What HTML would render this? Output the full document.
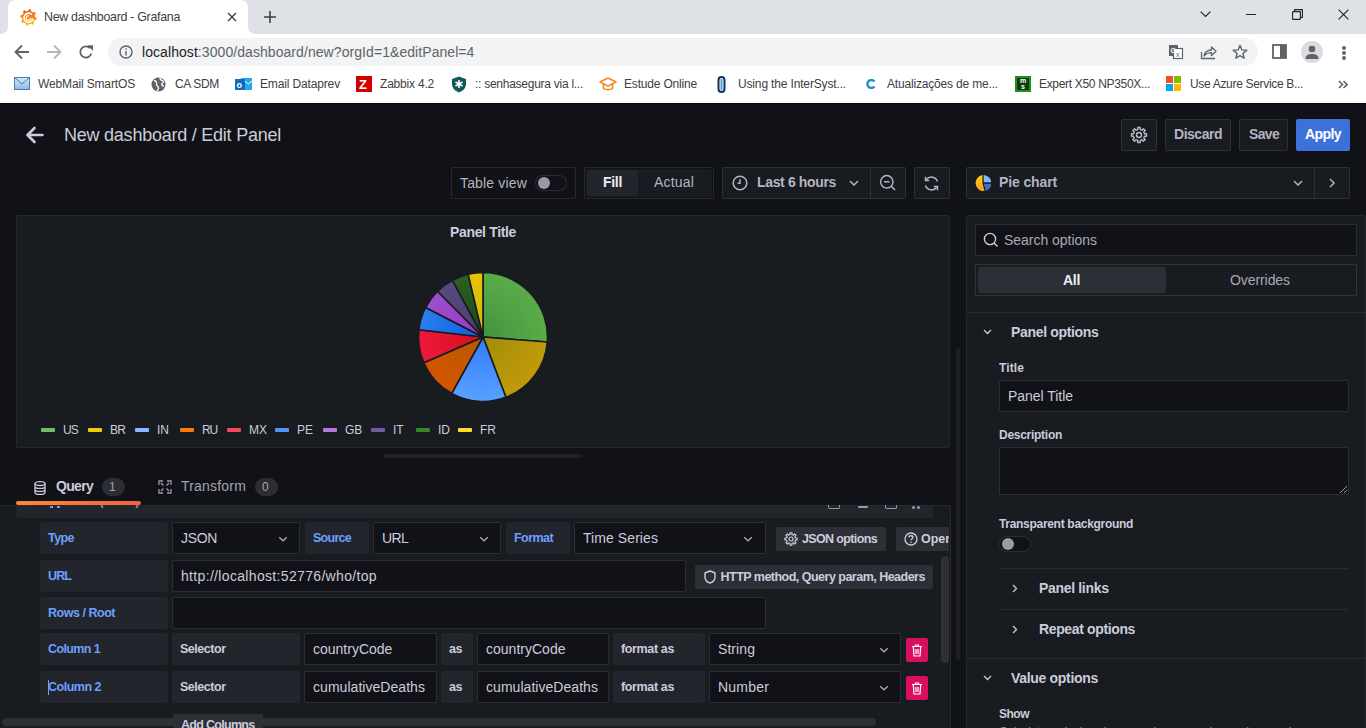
<!DOCTYPE html>
<html><head><meta charset="utf-8">
<style>
*{box-sizing:border-box;margin:0;padding:0}
html,body{width:1366px;height:728px;overflow:hidden;background:#111217;font-family:"Liberation Sans",sans-serif}
.a{position:absolute}
.t{position:absolute;white-space:nowrap;line-height:1}
/* chrome */
#tabstrip{left:0;top:0;width:1366px;height:34px;background:#dee1e6}
#tab{left:8px;top:0;width:240px;height:34px;background:#fff;border-radius:8px 8px 0 0}
#toolbar{left:0;top:34px;width:1366px;height:69px;background:#fff}
#omni{left:108px;top:38px;width:1150px;height:28px;background:#f1f3f4;border-radius:14px}
.ct{font-size:12px;color:#3c4043}
/* grafana */
#g{left:0;top:103px;width:1366px;height:625px;background:#111217;border-top:1px solid #050609}
.btn{position:absolute;border:1px solid rgba(204,204,220,0.12);background:#181b1f;border-radius:2px}
.gt{color:#ccccdc}
</style></head><body>
<!-- Browser chrome -->
<div id="tabstrip" class="a"></div>
<div id="toolbar" class="a"></div>
<div id="omni" class="a"></div>
<!-- tab -->
<svg class="a" style="left:0;top:0" width="1366" height="34">
  <path d="M0 34 Q8 34 8 26 L8 8 Q8 0 16 0 L240 0 Q248 0 248 8 L248 26 Q248 34 256 34 Z" fill="#fff"></path>
</svg>
<svg class="a" style="left:20px;top:9px" width="17" height="17" viewBox="0 0 16 16"><defs><linearGradient id="gf" x1="0" y1="1" x2="0" y2="0"><stop offset="0" stop-color="#fcc80a"/><stop offset="1" stop-color="#f2502a"/></linearGradient></defs><path d="M7.67 1.71 L8.55 0.12 L10.18 0.41 L10.46 2.20 L12.22 3.32 L13.96 2.82 L14.91 4.17 L13.84 5.64 L14.29 7.67 L15.88 8.55 L15.59 10.18 L13.80 10.46 L12.68 12.22 L13.18 13.96 L11.83 14.91 L10.36 13.84 L8.33 14.29 L7.45 15.88 L5.82 15.59 L5.54 13.80 L3.78 12.68 L2.04 13.18 L1.09 11.83 L2.16 10.36 L1.71 8.33 L0.12 7.45 L0.41 5.82 L2.20 5.54 L3.32 3.78 L2.82 2.04 L4.17 1.09 L5.64 2.16Z" fill="url(#gf)"/><path d="M11.2 5.2A4.3 4.3 0 1 0 12.3 9.2" fill="none" stroke="#fff" stroke-width="1.5"/><path d="M10.3 8.5A2.2 2.2 0 1 1 8.3 6.3" fill="none" stroke="#fff" stroke-width="1.1"/></svg>
<div class="t ct" style="left: 44px; top: 11px; font-size: 12.4px; color: rgb(60, 64, 67); letter-spacing: -0.286px;">New dashboard - Grafana</div>
<svg class="a" style="left:227px;top:12px" width="10" height="10"><path d="M1 1L9 9M9 1L1 9" stroke="#3c4043" stroke-width="1.4"></path></svg>
<svg class="a" style="left:263px;top:10px" width="14" height="14"><path d="M7 1V13M1 7H13" stroke="#3c4043" stroke-width="1.6"></path></svg>
<!-- window controls -->
<svg class="a" style="left:1199.5px;top:10.5px" width="11" height="7"><path d="M0.6 0.6L5.5 5.5L10.4 0.6" fill="none" stroke="#202124" stroke-width="1.1"/></svg>
<div class="a" style="left:1246px;top:14px;width:10px;height:1px;background:#202124"></div>
<svg class="a" style="left:1291.5px;top:8.5px" width="11" height="11"><rect x="0.6" y="2.6" width="7.8" height="7.8" rx="0.5" fill="none" stroke="#202124" stroke-width="1.1"/><path d="M2.6 2.6V0.6H10.4V8.4H8.4" fill="none" stroke="#202124" stroke-width="1.1"/></svg>
<svg class="a" style="left:1337.5px;top:8.5px" width="11" height="11"><path d="M0.6 0.6L10.4 10.4M10.4 0.6L0.6 10.4" stroke="#202124" stroke-width="1.1"/></svg>
<!-- toolbar -->
<svg class="a" style="left:14px;top:44px" width="16" height="16"><path d="M15 8H2M8 1.5L1.5 8L8 14.5" fill="none" stroke="#5f6368" stroke-width="1.8"></path></svg>
<svg class="a" style="left:46px;top:44px" width="16" height="16"><path d="M1 8H14M8 1.5L14.5 8L8 14.5" fill="none" stroke="#b4b6b9" stroke-width="1.8"></path></svg>
<svg class="a" style="left:78px;top:44px" width="16" height="16"><path d="M13.3 9.5A5.6 5.6 0 1 1 12 4.2" fill="none" stroke="#5f6368" stroke-width="1.8"></path><path d="M9.3 1.3L15 1.3L15 7Z" fill="#5f6368"></path></svg>
<svg class="a" style="left:119px;top:45px" width="14" height="14"><circle cx="7" cy="7" r="6" fill="none" stroke="#5f6368" stroke-width="1.4"></circle><rect x="6.3" y="6" width="1.4" height="4.5" fill="#5f6368"></rect><rect x="6.3" y="3.3" width="1.4" height="1.5" fill="#5f6368"></rect></svg>
<div class="t" style="left: 142px; top: 45px; font-size: 14px; color: rgb(95, 99, 104); letter-spacing: 0.067px;"><span style="color:#202124">localhost</span>:3000/dashboard/new?orgId=1&amp;editPanel=4</div>
<!-- right icons -->
<svg class="a" style="left:1168px;top:44px" width="16" height="16"><rect x="1" y="1" width="9" height="11" fill="#5f6368"></rect><rect x="5.5" y="4.5" width="9" height="10" fill="#fff" stroke="#5f6368" stroke-width="1.2"></rect><text x="2.5" y="9" font-size="7" fill="#fff" font-family="Liberation Sans" font-weight="bold">G</text><text x="8" y="12.5" font-size="7" fill="#5f6368" font-family="Liberation Sans">x</text></svg>
<svg class="a" style="left:1200px;top:44px" width="17" height="16"><path d="M1.5 8V14.5H15" fill="none" stroke="#5f6368" stroke-width="1.3"></path><path d="M4 12C5 7 8.5 6 11.5 6V3L16 7.3L11.5 11.5V8.6C8.5 8.6 6 9.5 4 12Z" fill="none" stroke="#5f6368" stroke-width="1.3" stroke-linejoin="round"></path></svg>
<svg class="a" style="left:1232px;top:44px" width="16" height="16"><path d="M8 1.3L9.9 5.9L14.8 6.2L11 9.4L12.2 14.2L8 11.6L3.8 14.2L5 9.4L1.2 6.2L6.1 5.9Z" fill="none" stroke="#5f6368" stroke-width="1.4" stroke-linejoin="round"></path></svg>
<svg class="a" style="left:1272px;top:44px" width="16" height="15"><rect x="1" y="1" width="13" height="13" fill="none" stroke="#5f6368" stroke-width="1.8"></rect><rect x="8" y="1" width="6" height="13" fill="#5f6368"></rect></svg>
<div class="a" style="left:1301px;top:41px;width:22px;height:22px;border-radius:11px;background:#dadce0"></div>
<svg class="a" style="left:1304px;top:45px" width="16" height="15"><circle cx="8" cy="4" r="3.3" fill="#5f6368"></circle><path d="M1.5 14C1.5 10 4.5 9 8 9C11.5 9 14.5 10 14.5 14Z" fill="#5f6368"></path></svg>
<div class="a" style="left:1342px;top:46px;width:4px;height:4px;border-radius:2px;background:#5f6368"></div>
<div class="a" style="left:1342px;top:51px;width:4px;height:4px;border-radius:2px;background:#5f6368"></div>
<div class="a" style="left:1342px;top:56px;width:4px;height:4px;border-radius:2px;background:#5f6368"></div>
<!-- bookmarks -->
<svg class="a" style="left:14px;top:77px" width="16" height="14"><defs><linearGradient id="ml" x1="0" y1="0" x2="0" y2="1"><stop offset="0" stop-color="#d6e8f7"/><stop offset="1" stop-color="#8db9e0"/></linearGradient></defs><rect x="0.5" y="0.5" width="15" height="12" fill="url(#ml)" stroke="#3f7fc0"/><path d="M0.5 0.5L8 7L15.5 0.5" fill="none" stroke="#3f7fc0"/></svg>
<div class="t ct" style="left: 38px; top: 78px; letter-spacing: -0.143px;">WebMail SmartOS</div>
<svg class="a" style="left:151px;top:77px" width="15" height="15"><circle cx="7.5" cy="7.5" r="7" fill="#5f6368"></circle><path d="M3 3.5C5 4 6 5 5.5 7C5 8.5 7 9 7.5 10.5C8 12 6.5 13 6 14M9 1C9 3 10.5 3.5 12 4C13 4.5 12 6 11 6.5C10 7 10.5 9 13 9" fill="none" stroke="#fff" stroke-width="1.3"></path></svg>
<div class="t ct" style="left: 175px; top: 78px; letter-spacing: -0.336px;">CA SDM</div>
<svg class="a" style="left:235px;top:76px" width="17" height="16"><rect x="6" y="2" width="11" height="12" fill="#28a8ea"></rect><rect x="0" y="3" width="10" height="11" fill="#0f6cbd"></rect><text x="1.5" y="12" font-size="9" font-weight="bold" fill="#fff" font-family="Liberation Sans">o</text><path d="M10 5L13.5 8L17 5" fill="none" stroke="#fff" stroke-width="1"></path></svg>
<div class="t ct" style="left: 260px; top: 78px; letter-spacing: -0.145px;">Email Dataprev</div>
<div class="a" style="left:356px;top:76px;width:16px;height:16px;background:#d40000"></div>
<div class="t" style="left: 359px; top: 78px; font-size: 13px; font-weight: bold; color: rgb(255, 255, 255);">Z</div>
<div class="t ct" style="left: 380px; top: 78px; letter-spacing: -0.205px;">Zabbix 4.2</div>
<svg class="a" style="left:451px;top:76px" width="16" height="17"><path d="M8 0.5L15 3V8C15 12 12 15 8 16.5C4 15 1 12 1 8V3Z" fill="#0e5c55"></path><path d="M8 4V12M4.5 6L11.5 10M11.5 6L4.5 10" stroke="#fff" stroke-width="1.6"></path></svg>
<div class="t ct" style="left: 475px; top: 78px; letter-spacing: -0.264px;">:: senhasegura via l...</div>
<svg class="a" style="left:599px;top:77px" width="18" height="15"><path d="M1 5L9 1L17 5L9 9Z" fill="none" stroke="#f08a24" stroke-width="1.6" stroke-linejoin="round"></path><path d="M4.5 7V11.5C6 13 12 13 13.5 11.5V7" fill="none" stroke="#f08a24" stroke-width="1.6"></path></svg>
<div class="t ct" style="left: 624px; top: 78px; letter-spacing: -0.184px;">Estude Online</div>
<svg class="a" style="left:717px;top:76px" width="10" height="17"><rect x="1.5" y="1" width="6" height="15" rx="3" fill="none" stroke="#1a2d5a" stroke-width="2"></rect><rect x="3.5" y="3" width="2" height="11" fill="#3fa7e0"></rect></svg>
<div class="t ct" style="left: 738px; top: 78px; letter-spacing: -0.154px;">Using the InterSyst...</div>
<svg class="a" style="left:865px;top:79px" width="11" height="10"><path d="M9.5 2.5A4 4 0 1 0 9.5 7.5" fill="none" stroke="#1d8fd1" stroke-width="2.4"></path></svg>
<div class="t ct" style="left: 887px; top: 78px; letter-spacing: -0.178px;">Atualizações de me...</div>
<div class="a" style="left:1015px;top:76px;width:16px;height:16px;background:#1f8f1f"></div>
<div class="a" style="left:1017px;top:78px;width:12px;height:12px;background:#0b3d0b"></div>
<div class="t" style="left: 1017px; top: 78px; font-size: 7px; font-weight: bold; color: rgb(255, 255, 255); line-height: 6px; width: 12px; text-align: center;">m<br>s</div>
<div class="t ct" style="left: 1039px; top: 78px; letter-spacing: -0.32px;">Expert X50 NP350X...</div>
<div class="a" style="left:1166px;top:76px;width:7px;height:7px;background:#f25022"></div>
<div class="a" style="left:1174px;top:76px;width:7px;height:7px;background:#7fba00"></div>
<div class="a" style="left:1166px;top:84px;width:7px;height:7px;background:#00a4ef"></div>
<div class="a" style="left:1174px;top:84px;width:7px;height:7px;background:#ffb900"></div>
<div class="t ct" style="left: 1190px; top: 78px; letter-spacing: -0.32px;">Use Azure Service B...</div>
<svg class="a" style="left:1338px;top:80px" width="10" height="9"><path d="M1 1L4.5 4.5L1 8M5.5 1L9 4.5L5.5 8" fill="none" stroke="#5f6368" stroke-width="1.6"></path></svg>


<!-- Grafana -->
<div id="g" class="a"></div>
<!-- page toolbar -->
<svg class="a" style="left:25px;top:126px" width="19" height="18" viewBox="0 0 19 18"><path d="M17.5 9H3M9.5 2L2.5 9L9.5 16" fill="none" stroke="#ccccdc" stroke-width="2.6" stroke-linecap="round" stroke-linejoin="round"></path></svg>
<div class="t gt" style="left: 64px; top: 126px; font-size: 18px; letter-spacing: -0.236px;">New dashboard / Edit Panel</div>
<div class="btn" style="left:1121px;top:119px;width:36px;height:32px"></div>
<svg class="a" style="left:1130px;top:126px" width="18" height="18"><path d="M7.28 3.67 L7.75 3.54 L7.75 1.50 L10.25 1.50 L10.25 3.54 L11.55 4.01 L11.98 4.26 L13.42 2.82 L15.18 4.58 L13.74 6.02 L14.33 7.28 L14.46 7.75 L16.50 7.75 L16.50 10.25 L14.46 10.25 L13.99 11.55 L13.74 11.98 L15.18 13.42 L13.42 15.18 L11.98 13.74 L10.72 14.33 L10.25 14.46 L10.25 16.50 L7.75 16.50 L7.75 14.46 L6.45 13.99 L6.02 13.74 L4.58 15.18 L2.82 13.42 L4.26 11.98 L3.67 10.72 L3.54 10.25 L1.50 10.25 L1.50 7.75 L3.54 7.75 L4.01 6.45 L4.26 6.02 L2.82 4.58 L4.58 2.82 L6.02 4.26Z" fill="none" stroke="#b9b9c6" stroke-width="1.4" stroke-linejoin="round"/><circle cx="9" cy="9" r="2.5" fill="none" stroke="#b9b9c6" stroke-width="1.4"/></svg>
<div class="btn" style="left:1165px;top:119px;width:66px;height:32px"></div>
<div class="t" style="left: 1174px; top: 127px; font-size: 14px; font-weight: bold; color: rgb(180, 180, 194); letter-spacing: -0.48px;">Discard</div>
<div class="btn" style="left:1239px;top:119px;width:49px;height:32px"></div>
<div class="t" style="left: 1249px; top: 127px; font-size: 14px; font-weight: bold; color: rgb(180, 180, 194); letter-spacing: -0.676px;">Save</div>
<div class="a" style="left:1296px;top:119px;width:54px;height:32px;background:#3d71d9;border-radius:2px"></div>
<div class="t" style="left: 1305px; top: 127px; font-size: 14px; font-weight: bold; color: rgb(255, 255, 255); letter-spacing: -0.578px;">Apply</div>

<!-- second row -->
<div class="btn" style="left:451px;top:167px;width:125px;height:32px;background:#111217"></div>
<div class="t" style="left: 460px; top: 176px; font-size: 14px; color: rgb(180, 180, 194); letter-spacing: 0.163px;">Table view</div>
<div class="a" style="left:535px;top:175px;width:32px;height:16px;border-radius:8px;border:1px solid rgba(204,204,220,0.15);background:#111217"></div>
<div class="a" style="left:538px;top:177px;width:12px;height:12px;border-radius:6px;background:#9a99a6"></div>
<div class="btn" style="left:584px;top:167px;width:130px;height:32px;background:#111217"></div>
<div class="a" style="left:586px;top:169px;width:126px;height:28px;background:#181b1f;border-radius:2px"></div>
<div class="a" style="left:587px;top:170px;width:51px;height:26px;background:#22252b;border-radius:2px"></div>
<div class="t" style="left: 603px; top: 175px; font-size: 14px; font-weight: bold; color: rgb(236, 236, 243); letter-spacing: -0.309px;">Fill</div>
<div class="t" style="left: 654px; top: 175px; font-size: 14px; color: rgb(180, 180, 194); letter-spacing: 0.18px;">Actual</div>
<div class="btn" style="left:722px;top:167px;width:184px;height:32px"></div>
<div class="a" style="left:870px;top:168px;width:1px;height:30px;background:rgba(204,204,220,0.12)"></div>
<svg class="a" style="left:732px;top:175px" width="16" height="16"><circle cx="8" cy="8" r="6.8" fill="none" stroke="#b4b4c2" stroke-width="1.5"></circle><path d="M8 4.2V8.3H5.5" fill="none" stroke="#b4b4c2" stroke-width="1.5"></path></svg>
<div class="t" style="left: 757px; top: 175px; font-size: 14px; font-weight: bold; color: rgb(180, 180, 194); letter-spacing: -0.354px;">Last 6 hours</div>
<svg class="a" style="left:849px;top:180px" width="10" height="6"><path d="M1 1L5 5L9 1" fill="none" stroke="#b4b4c2" stroke-width="1.5"></path></svg>
<svg class="a" style="left:879px;top:174px" width="18" height="18"><circle cx="7.8" cy="7.8" r="6.2" fill="none" stroke="#b4b4c2" stroke-width="1.5"></circle><path d="M5 7.8H10.6M12.3 12.3L16 16" fill="none" stroke="#b4b4c2" stroke-width="1.5"></path></svg>
<div class="btn" style="left:914px;top:167px;width:36px;height:32px"></div>
<svg class="a" style="left:923px;top:175px" width="17" height="17" viewBox="0 0 17 17"><path d="M14.5 6.5A6.3 6.3 0 0 0 3.3 4.8M2.5 10.5A6.3 6.3 0 0 0 13.7 12.2" fill="none" stroke="#b4b4c2" stroke-width="1.5"></path><path d="M2.5 1.8V5.5H6.2M14.5 15.2V11.5H10.8" fill="none" stroke="#b4b4c2" stroke-width="1.5"></path></svg>
<div class="btn" style="left:966px;top:167px;width:384px;height:32px"></div>
<div class="a" style="left:1314px;top:168px;width:1px;height:30px;background:rgba(204,204,220,0.12)"></div>
<svg class="a" style="left:975px;top:174.8px" width="16.4" height="16.4" viewBox="0 0 16 16"><defs><linearGradient id="pyg" x1="0" y1="0" x2="0" y2="1"><stop offset="0" stop-color="#ffd30a"/><stop offset="1" stop-color="#ff9a22"/></linearGradient></defs><path d="M7.3 0.05A8 8 0 0 0 9.4 15.9L7.3 8Z" fill="url(#pyg)"/><path d="M8.5 0.05A8 8 0 0 1 15.98 7.1L8.5 7.1Z" fill="#84b5ff"/><path d="M15.98 8.5A8 8 0 0 1 10.6 15.5L8.5 8.5Z" fill="#3e6fc4"/></svg>
<div class="t" style="left: 999px; top: 175px; font-size: 14px; font-weight: bold; color: rgb(180, 180, 194); letter-spacing: -0.127px;">Pie chart</div>
<svg class="a" style="left:1293px;top:180px" width="10" height="6"><path d="M1 1L5 5L9 1" fill="none" stroke="#b4b4c2" stroke-width="1.5"></path></svg>
<svg class="a" style="left:1329px;top:178px" width="6" height="10"><path d="M1 1L5 5L1 9" fill="none" stroke="#b4b4c2" stroke-width="1.5"></path></svg>

<!-- panel -->
<div class="a" style="left:16px;top:215px;width:934px;height:233px;background:#181b1f;border:1px solid rgba(204,204,220,0.07);border-radius:2px"></div>
<div class="t" style="left: 450px; top: 225px; font-size: 14px; font-weight: bold; color: rgb(204, 204, 220); letter-spacing: -0.344px;">Panel Title</div>
<div id="pie"></div><svg id="piesvg" class="a" style="left:408.3px;top:261.7px" width="150" height="150"><defs><radialGradient id="pg0" cx="75.0" cy="75.0" r="64.5" gradientUnits="userSpaceOnUse"><stop offset="0" stop-color="#44933f"></stop><stop offset="1" stop-color="#5aac49"></stop></radialGradient><radialGradient id="pg1" cx="75.0" cy="75.0" r="64.5" gradientUnits="userSpaceOnUse"><stop offset="0" stop-color="#9f8e08"></stop><stop offset="1" stop-color="#c19a0a"></stop></radialGradient><radialGradient id="pg2" cx="75.0" cy="75.0" r="64.5" gradientUnits="userSpaceOnUse"><stop offset="0" stop-color="#3379ff"></stop><stop offset="1" stop-color="#57a1ff"></stop></radialGradient><radialGradient id="pg3" cx="75.0" cy="75.0" r="64.5" gradientUnits="userSpaceOnUse"><stop offset="0" stop-color="#b25900"></stop><stop offset="1" stop-color="#d65500"></stop></radialGradient><radialGradient id="pg4" cx="75.0" cy="75.0" r="64.5" gradientUnits="userSpaceOnUse"><stop offset="0" stop-color="#d50f1c"></stop><stop offset="1" stop-color="#ef193c"></stop></radialGradient><radialGradient id="pg5" cx="75.0" cy="75.0" r="64.5" gradientUnits="userSpaceOnUse"><stop offset="0" stop-color="#1159e1"></stop><stop offset="1" stop-color="#2880ee"></stop></radialGradient><radialGradient id="pg6" cx="75.0" cy="75.0" r="64.5" gradientUnits="userSpaceOnUse"><stop offset="0" stop-color="#9b36c3"></stop><stop offset="1" stop-color="#9d4fce"></stop></radialGradient><radialGradient id="pg7" cx="75.0" cy="75.0" r="64.5" gradientUnits="userSpaceOnUse"><stop offset="0" stop-color="#4c3d69"></stop><stop offset="1" stop-color="#574a80"></stop></radialGradient><radialGradient id="pg8" cx="75.0" cy="75.0" r="64.5" gradientUnits="userSpaceOnUse"><stop offset="0" stop-color="#1a4617"></stop><stop offset="1" stop-color="#2b6120"></stop></radialGradient><radialGradient id="pg9" cx="75.0" cy="75.0" r="64.5" gradientUnits="userSpaceOnUse"><stop offset="0" stop-color="#c9b805"></stop><stop offset="1" stop-color="#ebc106"></stop></radialGradient></defs><path d="M75.00 75.00L75.00 10.50A64.5 64.5 0 0 1 139.30 80.06Z" fill="url(#pg0)" stroke="#181b1f" stroke-width="1.6" stroke-linejoin="round"></path><path d="M75.00 75.00L139.30 80.06A64.5 64.5 0 0 1 97.90 135.30Z" fill="url(#pg1)" stroke="#181b1f" stroke-width="1.6" stroke-linejoin="round"></path><path d="M75.00 75.00L97.90 135.30A64.5 64.5 0 0 1 43.73 131.41Z" fill="url(#pg2)" stroke="#181b1f" stroke-width="1.6" stroke-linejoin="round"></path><path d="M75.00 75.00L43.73 131.41A64.5 64.5 0 0 1 15.85 100.72Z" fill="url(#pg3)" stroke="#181b1f" stroke-width="1.6" stroke-linejoin="round"></path><path d="M75.00 75.00L15.85 100.72A64.5 64.5 0 0 1 10.91 67.70Z" fill="url(#pg4)" stroke="#181b1f" stroke-width="1.6" stroke-linejoin="round"></path><path d="M75.00 75.00L10.91 67.70A64.5 64.5 0 0 1 17.68 45.42Z" fill="url(#pg5)" stroke="#181b1f" stroke-width="1.6" stroke-linejoin="round"></path><path d="M75.00 75.00L17.68 45.42A64.5 64.5 0 0 1 29.55 29.23Z" fill="url(#pg6)" stroke="#181b1f" stroke-width="1.6" stroke-linejoin="round"></path><path d="M75.00 75.00L29.55 29.23A64.5 64.5 0 0 1 44.42 18.21Z" fill="url(#pg7)" stroke="#181b1f" stroke-width="1.6" stroke-linejoin="round"></path><path d="M75.00 75.00L44.42 18.21A64.5 64.5 0 0 1 60.16 12.23Z" fill="url(#pg8)" stroke="#181b1f" stroke-width="1.6" stroke-linejoin="round"></path><path d="M75.00 75.00L60.16 12.23A64.5 64.5 0 0 1 75.00 10.50Z" fill="url(#pg9)" stroke="#181b1f" stroke-width="1.6" stroke-linejoin="round"></path></svg>
<div id="legend"></div><div class="a" style="left:41px;top:428px;width:14px;height:4px;border-radius:1px;background:#73BF69"></div><div class="t" style="left: 63px; top: 424px; font-size: 12px; color: rgb(204, 204, 220); letter-spacing: -0.836px;">US</div><div class="a" style="left:88px;top:428px;width:14px;height:4px;border-radius:1px;background:#F2CC0C"></div><div class="t" style="left: 110px; top: 424px; font-size: 12px; color: rgb(204, 204, 220); letter-spacing: -0.836px;">BR</div><div class="a" style="left:135px;top:428px;width:14px;height:4px;border-radius:1px;background:#8AB8FF"></div><div class="t" style="left: 157px; top: 424px; font-size: 12px; color: rgb(204, 204, 220);">IN</div><div class="a" style="left:180px;top:428px;width:14px;height:4px;border-radius:1px;background:#FF780A"></div><div class="t" style="left: 202px; top: 424px; font-size: 12px; color: rgb(204, 204, 220); letter-spacing: -1.172px;">RU</div><div class="a" style="left:227px;top:428px;width:14px;height:4px;border-radius:1px;background:#F2495C"></div><div class="t" style="left: 249px; top: 424px; font-size: 12px; color: rgb(204, 204, 220); letter-spacing: 0px;">MX</div><div class="a" style="left:275px;top:428px;width:14px;height:4px;border-radius:1px;background:#5794F2"></div><div class="t" style="left: 297px; top: 424px; font-size: 12px; color: rgb(204, 204, 220);">PE</div><div class="a" style="left:323px;top:428px;width:14px;height:4px;border-radius:1px;background:#B877D9"></div><div class="t" style="left: 345px; top: 424px; font-size: 12px; color: rgb(204, 204, 220);">GB</div><div class="a" style="left:371px;top:428px;width:14px;height:4px;border-radius:1px;background:#705DA0"></div><div class="t" style="left: 393px; top: 424px; font-size: 12px; color: rgb(204, 204, 220);">IT</div><div class="a" style="left:416px;top:428px;width:14px;height:4px;border-radius:1px;background:#37872D"></div><div class="t" style="left: 438px; top: 424px; font-size: 12px; color: rgb(204, 204, 220);">ID</div><div class="a" style="left:458px;top:428px;width:14px;height:4px;border-radius:1px;background:#FADE2A"></div><div class="t" style="left: 480px; top: 424px; font-size: 12px; color: rgb(204, 204, 220);">FR</div>
<div class="a" style="left:383px;top:454px;width:200px;height:4px;border-radius:2px;background:#1f2025"></div>

<!-- splitter scrollbar -->
<div class="a" style="left:956px;top:348px;width:4px;height:312px;border-radius:2px;background:#1f2025"></div>

<!-- tabs -->
<div id="tabs"></div>
<svg class="a" style="left:34px;top:481px" width="12" height="14" viewBox="0 0 12 14"><ellipse cx="6" cy="2.6" rx="5" ry="1.9" fill="none" stroke="#ccccdc" stroke-width="1.3"></ellipse><path d="M1 2.6V11.4C1 12.5 3.2 13.3 6 13.3S11 12.5 11 11.4V2.6M1 5.5C1 6.6 3.2 7.4 6 7.4S11 6.6 11 5.5M1 8.5C1 9.6 3.2 10.4 6 10.4S11 9.6 11 8.5" fill="none" stroke="#ccccdc" stroke-width="1.3"></path></svg>
<div class="t" style="left: 56px; top: 479px; font-size: 14px; font-weight: bold; color: rgb(204, 204, 220); letter-spacing: -0.694px;">Query</div>
<div class="a" style="left:102px;top:478px;width:23px;height:18px;border-radius:9px;background:#2c2e33"></div>
<div class="t" style="left: 109px; top: 481px; font-size: 12px; color: rgb(163, 163, 176);">1</div>
<svg class="a" style="left:158px;top:480px" width="14" height="14" viewBox="0 0 14 14"><path d="M1 5V1H5M9 1H13V5M13 9V13H9M5 13H1V9" fill="none" stroke="#9a9aa8" stroke-width="1.3"></path><path d="M3 3L5.5 5.5M11 3L8.5 5.5M11 11L8.5 8.5M3 11L5.5 8.5" fill="none" stroke="#9a9aa8" stroke-width="1.3"></path></svg>
<div class="t" style="left: 181px; top: 479px; font-size: 14px; color: rgb(163, 163, 176); letter-spacing: 0.191px;">Transform</div>
<div class="a" style="left:255px;top:478px;width:23px;height:18px;border-radius:9px;background:#2c2e33"></div>
<div class="t" style="left: 262px; top: 481px; font-size: 12px; color: rgb(163, 163, 176);">0</div>
<div class="a" style="left:16px;top:501px;width:125px;height:4px;border-radius:2px;background:linear-gradient(90deg,#ff8833,#f55f3e)"></div>

<!-- query -->
<div id="query"></div>
<div class="a" style="left:-4px;top:505px;width:955px;height:240px;background:#181b1f;border:1px solid rgba(204,204,220,0.09);border-radius:3px"></div>
<div class="a" style="left:16px;top:506px;width:917px;height:12px;background:#22252b;border-radius:0 0 3px 3px"></div>
<div class="a" style="left:828px;top:505px;width:12px;height:4px;border:1.3px solid #9a9aa8;border-top:none;border-radius:0 0 2px 2px"></div><div class="a" style="left:858px;top:506px;width:10px;height:2px;border-radius:1px;background:#9a9aa8"></div><div class="a" style="left:885px;top:505px;width:12px;height:4px;border:1.3px solid #9a9aa8;border-top:none;border-radius:0 0 2px 2px"></div><div class="a" style="left:912px;top:506px;width:3px;height:3px;border-radius:2px;background:#9a9aa8"></div><div class="a" style="left:917px;top:506px;width:3px;height:3px;border-radius:2px;background:#9a9aa8"></div><div class="a" style="left:50px;top:506px;width:3px;height:2px;background:#6e9fff"></div><div class="a" style="left:57px;top:506px;width:3px;height:2px;background:#6e9fff"></div><div class="a" style="left:101px;top:505px;width:2px;height:3px;background:#8a8a96;transform:skewX(20deg)"></div><div class="a" style="left:136px;top:505px;width:2px;height:3px;background:#8a8a96;transform:skewX(-20deg)"></div><div class="a" style="left:40px;top:522px;width:128px;height:32px;background:#22252b;border-radius:2px"></div><div class="t" style="left: 48px; top: 531.8px; font-size: 12.5px; font-weight: bold; color: rgb(110, 159, 255); letter-spacing: -0.562px;">Type</div><div class="a" style="left:172px;top:522px;width:128px;height:32px;background:#111217;border:1px solid rgba(204,204,220,0.15);border-radius:2px"></div><div class="t" style="left: 181px; top: 531px; font-size: 14px; color: rgb(204, 204, 220); letter-spacing: -0.336px;">JSON</div><svg class="a" style="left:278px;top:536px" width="10" height="6"><path d="M1.2 1.2L5 4.8L8.8 1.2" fill="none" stroke="#a9a9b6" stroke-width="1.3"></path></svg><div class="a" style="left:305px;top:522px;width:64px;height:32px;background:#22252b;border-radius:2px"></div><div class="t" style="left: 313px; top: 531.8px; font-size: 12.5px; font-weight: bold; color: rgb(110, 159, 255); letter-spacing: -0.732px;">Source</div><div class="a" style="left:373px;top:522px;width:128px;height:32px;background:#111217;border:1px solid rgba(204,204,220,0.15);border-radius:2px"></div><div class="t" style="left: 382px; top: 531px; font-size: 14px; color: rgb(204, 204, 220); letter-spacing: -0.6px;">URL</div><svg class="a" style="left:479px;top:536px" width="10" height="6"><path d="M1.2 1.2L5 4.8L8.8 1.2" fill="none" stroke="#a9a9b6" stroke-width="1.3"></path></svg><div class="a" style="left:506px;top:522px;width:64px;height:32px;background:#22252b;border-radius:2px"></div><div class="t" style="left: 514px; top: 531.8px; font-size: 12.5px; font-weight: bold; color: rgb(110, 159, 255); letter-spacing: -0.562px;">Format</div><div class="a" style="left:574px;top:522px;width:192px;height:32px;background:#111217;border:1px solid rgba(204,204,220,0.15);border-radius:2px"></div><div class="t" style="left: 583px; top: 531px; font-size: 14px; color: rgb(204, 204, 220); letter-spacing: 0.075px;">Time Series</div><svg class="a" style="left:743px;top:536px" width="10" height="6"><path d="M1.2 1.2L5 4.8L8.8 1.2" fill="none" stroke="#a9a9b6" stroke-width="1.3"></path></svg><div class="a" style="left:776px;top:527px;width:110px;height:24px;background:#2c2f35;border-radius:2px"></div><svg class="a" style="left:784px;top:532px" width="14" height="14"><path d="M5.62 2.72 L6.00 2.61 L5.98 0.88 L8.02 0.88 L8.00 2.61 L9.05 2.99 L9.39 3.19 L10.60 1.96 L12.04 3.40 L10.81 4.61 L11.28 5.62 L11.39 6.00 L13.12 5.98 L13.12 8.02 L11.39 8.00 L11.01 9.05 L10.81 9.39 L12.04 10.60 L10.60 12.04 L9.39 10.81 L8.38 11.28 L8.00 11.39 L8.02 13.12 L5.98 13.12 L6.00 11.39 L4.95 11.01 L4.61 10.81 L3.40 12.04 L1.96 10.60 L3.19 9.39 L2.72 8.38 L2.61 8.00 L0.88 8.02 L0.88 5.98 L2.61 6.00 L2.99 4.95 L3.19 4.61 L1.96 3.40 L3.40 1.96 L4.61 3.19Z" fill="none" stroke="#ccccdc" stroke-width="1.2" stroke-linejoin="round"/><circle cx="7" cy="7" r="2" fill="none" stroke="#ccccdc" stroke-width="1.2"/></svg><div class="t" style="left: 802px; top: 533px; font-size: 12.5px; font-weight: bold; color: rgb(204, 204, 220); letter-spacing: -0.638px;">JSON options</div><div style="position:absolute;left:896px;top:527px;width:53px;height:24px;overflow:hidden"><div class="a" style="left:0px;top:0px;width:80px;height:24px;background:#2c2f35;border-radius:2px"></div><div class="t" style="left: 25px; top: 6px; font-size: 12.5px; font-weight: bold; color: rgb(204, 204, 220);">Open</div></div><svg class="a" style="left:904px;top:532px" width="14" height="14"><circle cx="7" cy="7" r="6" fill="none" stroke="#ccccdc" stroke-width="1.3"></circle><path d="M5 5.3C5 3.2 9 3.2 9 5.3C9 6.6 7 6.8 7 8.3" fill="none" stroke="#ccccdc" stroke-width="1.3"></path><circle cx="7" cy="10.3" r="0.8" fill="#ccccdc"></circle></svg><div class="a" style="left:40px;top:560px;width:128px;height:32px;background:#22252b;border-radius:2px"></div><div class="t" style="left: 48px; top: 569.8px; font-size: 12.5px; font-weight: bold; letter-spacing: -0.9px; color: rgb(110, 159, 255);">URL</div><div class="a" style="left:172px;top:560px;width:514px;height:32px;background:#111217;border:1px solid rgba(204,204,220,0.15);border-radius:2px"></div><div class="t" style="left: 181px; top: 569px; font-size: 14px; color: rgb(204, 204, 220); letter-spacing: 0.332px;">http://localhost:52776/who/top</div><div class="a" style="left:695px;top:565px;width:238px;height:24px;background:#2c2f35;border-radius:2px"></div><svg class="a" style="left:704px;top:570px" width="12" height="14"><path d="M6 1L11 3V7C11 10 8.8 12.2 6 13C3.2 12.2 1 10 1 7V3Z" fill="none" stroke="#ccccdc" stroke-width="1.4" stroke-linejoin="round"></path></svg><div class="t" style="left: 720.5px; top: 571px; font-size: 12.5px; font-weight: bold; color: rgb(204, 204, 220); letter-spacing: -0.514px;">HTTP method, Query param, Headers</div><div class="a" style="left:40px;top:597px;width:128px;height:32px;background:#22252b;border-radius:2px"></div><div class="t" style="left: 48px; top: 606.8px; font-size: 12.5px; font-weight: bold; color: rgb(110, 159, 255); letter-spacing: -0.474px;">Rows / Root</div><div class="a" style="left:172px;top:597px;width:594px;height:32px;background:#111217;border:1px solid rgba(204,204,220,0.15);border-radius:2px"></div><div class="a" style="left:40px;top:633px;width:128px;height:32px;background:#22252b;border-radius:2px"></div><div class="t" style="left: 48px; top: 642.8px; font-size: 12.5px; font-weight: bold; color: rgb(110, 159, 255); letter-spacing: -0.619px;">Column 1</div><div class="a" style="left:172px;top:633px;width:128px;height:32px;background:#22252b;border-radius:2px"></div><div class="t" style="left: 180px; top: 642.8px; font-size: 12.5px; font-weight: bold; color: rgb(204, 204, 220); letter-spacing: -0.468px;">Selector</div><div class="a" style="left:304px;top:633px;width:133px;height:32px;background:#111217;border:1px solid rgba(204,204,220,0.15);border-radius:2px"></div><div class="t" style="left: 313px; top: 642px; font-size: 14px; color: rgb(204, 204, 220); letter-spacing: 0.001px;">countryCode</div><div class="a" style="left:441px;top:633px;width:32px;height:32px;background:#22252b;border-radius:2px"></div><div class="t" style="left: 449px; top: 642.8px; font-size: 12.5px; font-weight: bold; color: rgb(204, 204, 220); letter-spacing: -0.453px;">as</div><div class="a" style="left:477px;top:633px;width:132px;height:32px;background:#111217;border:1px solid rgba(204,204,220,0.15);border-radius:2px"></div><div class="t" style="left: 486px; top: 642px; font-size: 14px; color: rgb(204, 204, 220); letter-spacing: 0.01px;">countryCode</div><div class="a" style="left:613px;top:633px;width:92px;height:32px;background:#22252b;border-radius:2px"></div><div class="t" style="left: 621px; top: 642.8px; font-size: 12.5px; font-weight: bold; color: rgb(204, 204, 220); letter-spacing: -0.365px;">format as</div><div class="a" style="left:709px;top:633px;width:192px;height:32px;background:#111217;border:1px solid rgba(204,204,220,0.15);border-radius:2px"></div><div class="t" style="left: 718px; top: 642px; font-size: 14px; color: rgb(204, 204, 220); letter-spacing: 0.07px;">String</div><svg class="a" style="left:879px;top:647px" width="10" height="6"><path d="M1.2 1.2L5 4.8L8.8 1.2" fill="none" stroke="#a9a9b6" stroke-width="1.3"></path></svg><div class="a" style="left:906px;top:638px;width:22px;height:24px;background:#d70f5e;border-radius:2px"></div><svg class="a" style="left:911px;top:644px" width="12" height="13"><path d="M1 2.5H11M4.5 2.5V1H7.5V2.5M2.3 2.5L3 12H9L9.7 2.5M5 5V10M7 5V10" fill="none" stroke="#fff" stroke-width="1.2"></path></svg><div class="a" style="left:40px;top:671px;width:128px;height:32px;background:#22252b;border-radius:2px"></div><div class="t" style="left: 48px; top: 680.8px; font-size: 12.5px; font-weight: bold; color: rgb(110, 159, 255); letter-spacing: -0.494px;">Column 2</div><div class="a" style="left:172px;top:671px;width:128px;height:32px;background:#22252b;border-radius:2px"></div><div class="t" style="left: 180px; top: 680.8px; font-size: 12.5px; font-weight: bold; color: rgb(204, 204, 220); letter-spacing: -0.468px;">Selector</div><div class="a" style="left:304px;top:671px;width:133px;height:32px;background:#111217;border:1px solid rgba(204,204,220,0.15);border-radius:2px"></div><div class="t" style="left: 313px; top: 680px; font-size: 14px; color: rgb(204, 204, 220); letter-spacing: 0.045px;">cumulativeDeaths</div><div class="a" style="left:441px;top:671px;width:32px;height:32px;background:#22252b;border-radius:2px"></div><div class="t" style="left: 449px; top: 680.8px; font-size: 12.5px; font-weight: bold; color: rgb(204, 204, 220); letter-spacing: -0.453px;">as</div><div class="a" style="left:477px;top:671px;width:132px;height:32px;background:#111217;border:1px solid rgba(204,204,220,0.15);border-radius:2px"></div><div class="t" style="left: 486px; top: 680px; font-size: 14px; color: rgb(204, 204, 220); letter-spacing: 0.045px;">cumulativeDeaths</div><div class="a" style="left:613px;top:671px;width:92px;height:32px;background:#22252b;border-radius:2px"></div><div class="t" style="left: 621px; top: 680.8px; font-size: 12.5px; font-weight: bold; color: rgb(204, 204, 220); letter-spacing: -0.365px;">format as</div><div class="a" style="left:709px;top:671px;width:192px;height:32px;background:#111217;border:1px solid rgba(204,204,220,0.15);border-radius:2px"></div><div class="t" style="left: 718px; top: 680px; font-size: 14px; color: rgb(204, 204, 220); letter-spacing: 0.201px;">Number</div><svg class="a" style="left:879px;top:685px" width="10" height="6"><path d="M1.2 1.2L5 4.8L8.8 1.2" fill="none" stroke="#a9a9b6" stroke-width="1.3"></path></svg><div class="a" style="left:906px;top:676px;width:22px;height:24px;background:#d70f5e;border-radius:2px"></div><svg class="a" style="left:911px;top:682px" width="12" height="13"><path d="M1 2.5H11M4.5 2.5V1H7.5V2.5M2.3 2.5L3 12H9L9.7 2.5M5 5V10M7 5V10" fill="none" stroke="#fff" stroke-width="1.2"></path></svg><div class="a" style="left:48px;top:680px;width:1px;height:15px;background:#6e9fff"></div><div class="a" style="left:2px;top:718px;width:874px;height:8px;border-radius:4px;background:#2e3035"></div><div class="a" style="left:173px;top:714px;width:90px;height:24px;background:#2c2f35;border-radius:2px"></div><div class="t" style="left: 181px; top: 719px; font-size: 12.5px; font-weight: bold; color: rgb(204, 204, 220); letter-spacing: -0.705px;">Add Columns</div><div class="a" style="left:941px;top:556px;width:8px;height:107px;border-radius:4px;background:#2e3035"></div>
<!-- options pane -->
<div id="opts"></div>
<div class="a" style="left:966px;top:215px;width:400px;height:520px;background:#181b1f;border:1px solid rgba(204,204,220,0.07);border-radius:2px"></div>
<div class="a" style="left:975px;top:224px;width:382px;height:32px;background:#111217;border:1px solid rgba(204,204,220,0.15);border-radius:2px"></div>
<svg class="a" style="left:983px;top:232px" width="16" height="16"><circle cx="7" cy="7" r="5.6" fill="none" stroke="#ccccdc" stroke-width="1.4"></circle><path d="M11 11L14.5 14.5" stroke="#ccccdc" stroke-width="1.4"></path></svg>
<div class="t" style="left: 1004px; top: 233px; font-size: 14px; color: rgb(169, 169, 182); letter-spacing: -0.029px;">Search options</div>
<div class="a" style="left:975px;top:264px;width:382px;height:32px;background:#181b1f;border:1px solid rgba(204,204,220,0.15);border-radius:2px"></div>
<div class="a" style="left:978px;top:267px;width:188px;height:26px;background:#2c2f35;border-radius:2px"></div>
<div class="t" style="left: 1063px; top: 273px; font-size: 14px; font-weight: bold; color: rgb(236, 236, 243); letter-spacing: -0.297px;">All</div>
<div class="t" style="left: 1230px; top: 273px; font-size: 14px; color: rgb(169, 169, 182); letter-spacing: -0.076px;">Overrides</div>
<div class="a" style="left:967px;top:312px;width:399px;height:1px;background:rgba(204,204,220,0.09)"></div>
<svg class="a" style="left:983px;top:329px" width="9" height="6"><path d="M1 1L4.5 4.5L8 1" fill="none" stroke="#ccccdc" stroke-width="1.3"></path></svg>
<div class="t" style="left: 1011px; top: 325px; font-size: 14px; font-weight: bold; color: rgb(204, 204, 220); letter-spacing: -0.331px;">Panel options</div>
<div class="t" style="left: 999px; top: 362px; font-size: 12px; font-weight: bold; color: rgb(204, 204, 220); letter-spacing: 0.109px;">Title</div>
<div class="a" style="left:999px;top:380px;width:350px;height:32px;background:#111217;border:1px solid rgba(204,204,220,0.15);border-radius:2px"></div>
<div class="t" style="left: 1008px; top: 389px; font-size: 14px; color: rgb(204, 204, 220); letter-spacing: -0.034px;">Panel Title</div>
<div class="t" style="left: 999px; top: 429px; font-size: 12px; font-weight: bold; color: rgb(204, 204, 220); letter-spacing: -0.274px;">Description</div>
<div class="a" style="left:999px;top:447px;width:350px;height:48px;background:#111217;border:1px solid rgba(204,204,220,0.15);border-radius:2px"></div>
<svg class="a" style="left:1338.5px;top:484.5px" width="9" height="9"><path d="M1 8L8 1M5 8L8 5" stroke="#9a9aa8" stroke-width="1"></path></svg>
<div class="t" style="left: 999px; top: 518px; font-size: 12px; font-weight: bold; color: rgb(204, 204, 220); letter-spacing: -0.305px;">Transparent background</div>
<div class="a" style="left:999px;top:536px;width:32px;height:16px;border-radius:8px;border:1px solid rgba(204,204,220,0.15);background:#111217"></div>
<div class="a" style="left:1002px;top:538px;width:12px;height:12px;border-radius:6px;background:#9a99a6"></div>
<div class="a" style="left:999px;top:568px;width:350px;height:1px;background:rgba(204,204,220,0.09)"></div>
<svg class="a" style="left:1012px;top:584px" width="6" height="9"><path d="M1 1L4.5 4.5L1 8" fill="none" stroke="#ccccdc" stroke-width="1.3"></path></svg>
<div class="t" style="left: 1039px; top: 581px; font-size: 14px; font-weight: bold; color: rgb(204, 204, 220); letter-spacing: -0.323px;">Panel links</div>
<div class="a" style="left:999px;top:609px;width:350px;height:1px;background:rgba(204,204,220,0.09)"></div>
<svg class="a" style="left:1012px;top:625px" width="6" height="9"><path d="M1 1L4.5 4.5L1 8" fill="none" stroke="#ccccdc" stroke-width="1.3"></path></svg>
<div class="t" style="left: 1039px; top: 622px; font-size: 14px; font-weight: bold; color: rgb(204, 204, 220); letter-spacing: -0.366px;">Repeat options</div>
<div class="a" style="left:967px;top:658px;width:399px;height:1px;background:rgba(204,204,220,0.09)"></div>
<svg class="a" style="left:983px;top:675px" width="9" height="6"><path d="M1 1L4.5 4.5L8 1" fill="none" stroke="#ccccdc" stroke-width="1.3"></path></svg>
<div class="t" style="left: 1011px; top: 671px; font-size: 14px; font-weight: bold; color: rgb(204, 204, 220); letter-spacing: -0.309px;">Value options</div>
<div class="t" style="left: 999px; top: 708px; font-size: 12px; font-weight: bold; color: rgb(204, 204, 220); letter-spacing: -0.5px;">Show</div>
<div class="t" style="left: 999px; top: 726px; font-size: 12px; color: rgb(142, 142, 154); letter-spacing: -0.3px;">Calculate a single value per column or series or show each row</div>



</body></html>
